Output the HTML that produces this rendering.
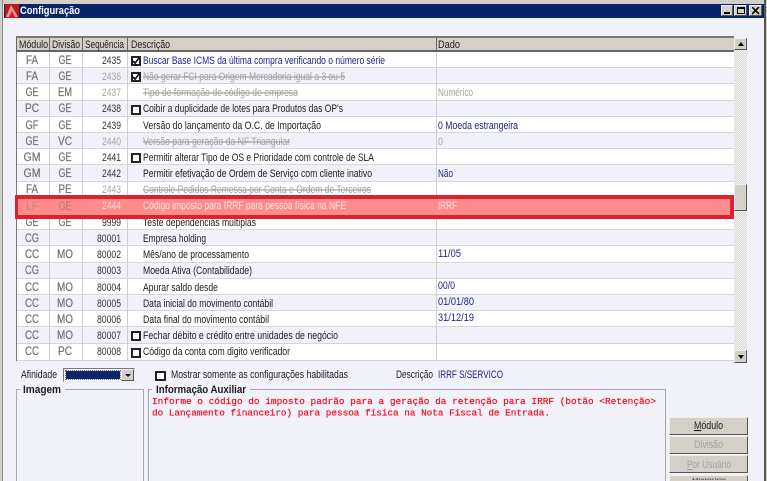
<!DOCTYPE html>
<html lang="pt"><head><meta charset="utf-8"><title>Configuração</title>
<style>
html,body{margin:0;padding:0;width:767px;height:481px;overflow:hidden}
body{background:#f1f1fa}
#w{position:absolute;left:0;top:0;width:767px;height:481px;overflow:hidden;background:#f1f1fa}
#w div,#w span{position:absolute;box-sizing:border-box}
#w svg{position:absolute;left:0;top:0}
svg.o{font-family:"Liberation Sans",sans-serif;font-size:11px;fill:#1c1c1c}
.r{left:17px;width:717px;border-bottom:1px solid #d6d6da;background:#fff}
.r.a{background:#f1f1fa}
.cl{width:1px;background:#cfcfd2;top:52px;height:309px}
.c{left:131px;width:10px;height:10px;border:2px solid #222;background:#fff}
.h{top:36px;height:16px;background:#d4d0c8;border-top:2px solid #777;border-bottom:2px solid #666;border-left:1px solid #666}
.w3d{background:#d4d0c8;border:1px solid;border-color:#eee #555 #555 #eee}
.btn{left:669px;width:79px;height:18px}
.gb{border:1px solid #a8a8ac;border-bottom:0;height:92px;top:389px}
.m{font-size:11.5px;fill:#707070;stroke:#707070;stroke-width:.2px}
.s{fill:#333}
.st{fill:#a0a0a0;text-decoration:line-through}
.gr{fill:#a4a4a4}
.bl{fill:#22228c}
.mono{font-family:"Liberation Mono",monospace;font-size:9.33px;fill:#f01020;stroke:#f01020;stroke-width:.2px}
.bd{font-weight:bold}
</style></head><body><div id="w">
<div style="left:0;top:0;width:767px;height:4px;background:#d4d0c8"></div>
<div style="left:0;top:0;width:3px;height:481px;background:#d4d0c8;border-right:1px solid #888"></div>
<div style="left:764px;top:0;width:3px;height:481px;background:#d4d0c8;border-left:2px solid #555"></div>
<div style="left:4px;top:4px;width:760px;height:14px;background:#0a246a"></div>
<div class="w3d" style="left:721px;top:5px;width:12px;height:11px"><span style="left:2px;top:6px;width:6px;height:2px;background:#000"></span></div>
<div class="w3d" style="left:734px;top:5px;width:13px;height:11px"><span style="left:2px;top:1px;width:8px;height:7px;border:1px solid #000;border-top-width:2px"></span></div>
<div class="w3d" style="left:749px;top:5px;width:13px;height:11px"><svg style="left:2px;top:1px" width="8" height="8"><path d="M0 0L7 7M7 0L0 7" stroke="#000" stroke-width="1.6"/></svg></div>

<div class="h" style="left:16px;width:33px"></div>
<div class="h" style="left:49px;width:33px"></div>
<div class="h" style="left:82px;width:45px"></div>
<div class="h" style="left:127px;width:309px"></div>
<div class="h" style="left:436px;width:298px"></div>
<div style="left:16px;top:52px;width:1px;height:309px;background:#777"></div>

<div class="r" style="top:52px;height:16px"></div>
<div class="r a" style="top:68px;height:16px"></div>
<div class="r" style="top:84px;height:17px"></div>
<div class="r a" style="top:101px;height:16px"></div>
<div class="r" style="top:117px;height:16px"></div>
<div class="r a" style="top:133px;height:16px"></div>
<div class="r" style="top:149px;height:16px"></div>
<div class="r a" style="top:165px;height:17px"></div>
<div class="r" style="top:182px;height:16px"></div>
<div class="r a" style="top:198px;height:16px"></div>
<div class="r" style="top:214px;height:16px"></div>
<div class="r a" style="top:230px;height:16px"></div>
<div class="r" style="top:246px;height:17px"></div>
<div class="r a" style="top:263px;height:16px"></div>
<div class="r" style="top:279px;height:16px"></div>
<div class="r a" style="top:295px;height:16px"></div>
<div class="r" style="top:311px;height:16px"></div>
<div class="r a" style="top:327px;height:17px"></div>
<div class="r" style="top:344px;height:17px"></div>
<div class="cl" style="left:49px"></div>
<div class="cl" style="left:82px"></div>
<div class="cl" style="left:127px"></div>
<div class="cl" style="left:436px"></div>

<div class="c" style="top:56px"><svg width="6" height="6" style="overflow:visible"><path d="M0 3l2 2.2L6 0" fill="none" stroke="#111" stroke-width="1.7"/></svg></div>
<div class="c" style="top:72px"><svg width="6" height="6" style="overflow:visible"><path d="M0 3l2 2.2L6 0" fill="none" stroke="#111" stroke-width="1.7"/></svg></div>
<div class="c" style="top:105px"></div>
<div class="c" style="top:153px"></div>
<div class="c" style="top:331px"></div>
<div class="c" style="top:348px"></div>

<svg class="o" width="767" height="481">
<text x="20" y="14" class="bd" style="fill:#fff" textLength="60" lengthAdjust="spacingAndGlyphs">Configuração</text>
<text x="19" y="48" textLength="29" lengthAdjust="spacingAndGlyphs">Módulo</text>
<text x="52" y="48" textLength="28" lengthAdjust="spacingAndGlyphs">Divisão</text>
<text x="85" y="48" textLength="39" lengthAdjust="spacingAndGlyphs">Sequência</text>
<text x="131" y="48" textLength="39" lengthAdjust="spacingAndGlyphs">Descrição</text>
<text x="438" y="48" textLength="22" lengthAdjust="spacingAndGlyphs">Dado</text>

<text class="m" x="26" y="64" textLength="12" lengthAdjust="spacingAndGlyphs">FA</text><text class="m" x="58.5" y="64" textLength="13" lengthAdjust="spacingAndGlyphs">GE</text><text class="s" x="102" y="64" textLength="19" lengthAdjust="spacingAndGlyphs">2435</text><text class="bl" x="143" y="64" textLength="242" lengthAdjust="spacingAndGlyphs">Buscar Base ICMS da última compra verificando o número série</text>
<text class="m" x="26" y="80" textLength="12" lengthAdjust="spacingAndGlyphs">FA</text><text class="m" x="58.5" y="80" textLength="13" lengthAdjust="spacingAndGlyphs">GE</text><text class="gr" x="102" y="80" textLength="19" lengthAdjust="spacingAndGlyphs">2436</text><text class="st" x="143" y="80" textLength="202" lengthAdjust="spacingAndGlyphs">Não gerar FCI para Origem Mercadoria igual a 3 ou 5</text>
<text class="m" x="25.5" y="96" textLength="13" lengthAdjust="spacingAndGlyphs">GE</text><text class="m" x="58" y="96" textLength="14" lengthAdjust="spacingAndGlyphs">EM</text><text class="gr" x="102" y="96" textLength="19" lengthAdjust="spacingAndGlyphs">2437</text><text class="st" x="143" y="96" textLength="155" lengthAdjust="spacingAndGlyphs">Tipo de formação do código de empresa</text><text class="gr" x="438" y="96" textLength="35" lengthAdjust="spacingAndGlyphs">Numérico</text>
<text class="m" x="25" y="112" textLength="14" lengthAdjust="spacingAndGlyphs">PC</text><text class="m" x="58.5" y="112" textLength="13" lengthAdjust="spacingAndGlyphs">GE</text><text class="s" x="102" y="112" textLength="19" lengthAdjust="spacingAndGlyphs">2438</text><text x="143" y="112" textLength="200" lengthAdjust="spacingAndGlyphs">Coibir a duplicidade de lotes para Produtos das OP's</text>
<text class="m" x="25.5" y="129" textLength="13" lengthAdjust="spacingAndGlyphs">GF</text><text class="m" x="58.5" y="129" textLength="13" lengthAdjust="spacingAndGlyphs">GE</text><text class="s" x="102" y="129" textLength="19" lengthAdjust="spacingAndGlyphs">2439</text><text x="143" y="129" textLength="178" lengthAdjust="spacingAndGlyphs">Versão do lançamento da O.C. de Importação</text><text class="bl" x="438" y="129" textLength="80" lengthAdjust="spacingAndGlyphs">0 Moeda estrangeira</text>
<text class="m" x="25.5" y="145" textLength="13" lengthAdjust="spacingAndGlyphs">GE</text><text class="m" x="58" y="145" textLength="14" lengthAdjust="spacingAndGlyphs">VC</text><text class="gr" x="102" y="145" textLength="19" lengthAdjust="spacingAndGlyphs">2440</text><text class="st" x="143" y="145" textLength="147" lengthAdjust="spacingAndGlyphs">Versão para geração da NF Triangular</text><text class="gr" x="438" y="145" textLength="5" lengthAdjust="spacingAndGlyphs">0</text>
<text class="m" x="23.5" y="161" textLength="17" lengthAdjust="spacingAndGlyphs">GM</text><text class="m" x="58.5" y="161" textLength="13" lengthAdjust="spacingAndGlyphs">GE</text><text class="s" x="102" y="161" textLength="19" lengthAdjust="spacingAndGlyphs">2441</text><text x="143" y="161" textLength="231" lengthAdjust="spacingAndGlyphs">Permitir alterar Tipo de OS e Prioridade com controle de SLA</text>
<text class="m" x="23.5" y="177" textLength="17" lengthAdjust="spacingAndGlyphs">GM</text><text class="m" x="58.5" y="177" textLength="13" lengthAdjust="spacingAndGlyphs">GE</text><text class="s" x="102" y="177" textLength="19" lengthAdjust="spacingAndGlyphs">2442</text><text x="143" y="177" textLength="229" lengthAdjust="spacingAndGlyphs">Permitir efetivação de Ordem de Serviço com cliente inativo</text><text class="bl" x="438" y="177" textLength="15" lengthAdjust="spacingAndGlyphs">Não</text>
<text class="m" x="26" y="193" textLength="12" lengthAdjust="spacingAndGlyphs">FA</text><text class="m" x="58.5" y="193" textLength="13" lengthAdjust="spacingAndGlyphs">PE</text><text class="gr" x="102" y="193" textLength="19" lengthAdjust="spacingAndGlyphs">2443</text><text class="st" x="143" y="193" textLength="228" lengthAdjust="spacingAndGlyphs">Controle Pedidos Remessa por Conta e Ordem de Terceiros</text>
<text class="m" x="25.5" y="226" textLength="13" lengthAdjust="spacingAndGlyphs">GE</text><text class="m" x="58.5" y="226" textLength="13" lengthAdjust="spacingAndGlyphs">GE</text><text class="s" x="102" y="226" textLength="19" lengthAdjust="spacingAndGlyphs">9999</text><text x="143" y="226" textLength="113" lengthAdjust="spacingAndGlyphs">Teste dependencias multiplas</text>
<text class="m" x="25" y="242" textLength="14" lengthAdjust="spacingAndGlyphs">CG</text><text class="s" x="97" y="242" textLength="24" lengthAdjust="spacingAndGlyphs">80001</text><text x="143" y="242" textLength="63" lengthAdjust="spacingAndGlyphs">Empresa holding</text>
<text class="m" x="25" y="258" textLength="14" lengthAdjust="spacingAndGlyphs">CC</text><text class="m" x="57" y="258" textLength="16" lengthAdjust="spacingAndGlyphs">MO</text><text class="s" x="97" y="258" textLength="24" lengthAdjust="spacingAndGlyphs">80002</text><text x="143" y="258" textLength="106" lengthAdjust="spacingAndGlyphs">Mês/ano de processamento</text><text class="bl" x="438" y="257" textLength="23" lengthAdjust="spacingAndGlyphs">11/05</text>
<text class="m" x="25" y="274" textLength="14" lengthAdjust="spacingAndGlyphs">CG</text><text class="s" x="97" y="274" textLength="24" lengthAdjust="spacingAndGlyphs">80003</text><text x="143" y="274" textLength="109" lengthAdjust="spacingAndGlyphs">Moeda Ativa (Contabilidade)</text>
<text class="m" x="25" y="291" textLength="14" lengthAdjust="spacingAndGlyphs">CC</text><text class="m" x="57" y="291" textLength="16" lengthAdjust="spacingAndGlyphs">MO</text><text class="s" x="97" y="291" textLength="24" lengthAdjust="spacingAndGlyphs">80004</text><text x="143" y="291" textLength="75" lengthAdjust="spacingAndGlyphs">Apurar saldo desde</text><text class="bl" x="438" y="289" textLength="17" lengthAdjust="spacingAndGlyphs">00/0</text>
<text class="m" x="25" y="307" textLength="14" lengthAdjust="spacingAndGlyphs">CC</text><text class="m" x="57" y="307" textLength="16" lengthAdjust="spacingAndGlyphs">MO</text><text class="s" x="97" y="307" textLength="24" lengthAdjust="spacingAndGlyphs">80005</text><text x="143" y="307" textLength="130" lengthAdjust="spacingAndGlyphs">Data inicial do movimento contábil</text><text class="bl" x="438" y="305" textLength="36" lengthAdjust="spacingAndGlyphs">01/01/80</text>
<text class="m" x="25" y="323" textLength="14" lengthAdjust="spacingAndGlyphs">CC</text><text class="m" x="57" y="323" textLength="16" lengthAdjust="spacingAndGlyphs">MO</text><text class="s" x="97" y="323" textLength="24" lengthAdjust="spacingAndGlyphs">80006</text><text x="143" y="323" textLength="126" lengthAdjust="spacingAndGlyphs">Data final do movimento contábil</text><text class="bl" x="438" y="321" textLength="36" lengthAdjust="spacingAndGlyphs">31/12/19</text>
<text class="m" x="25" y="339" textLength="14" lengthAdjust="spacingAndGlyphs">CC</text><text class="m" x="57" y="339" textLength="16" lengthAdjust="spacingAndGlyphs">MO</text><text class="s" x="97" y="339" textLength="24" lengthAdjust="spacingAndGlyphs">80007</text><text x="143" y="339" textLength="195" lengthAdjust="spacingAndGlyphs">Fechar débito e crédito entre unidades de negócio</text>
<text class="m" x="25" y="355" textLength="14" lengthAdjust="spacingAndGlyphs">CC</text><text class="m" x="58" y="355" textLength="14" lengthAdjust="spacingAndGlyphs">PC</text><text class="s" x="97" y="355" textLength="24" lengthAdjust="spacingAndGlyphs">80008</text><text x="143" y="355" textLength="147" lengthAdjust="spacingAndGlyphs">Código da conta com digito verificador</text>
</svg>

<svg style="left:5px;top:4px" width="14" height="14"><rect width="14" height="14" fill="#c01820"/><path d="M1 13L6 1l3 5 4 7z" fill="#ee9090"/><path d="M4 13l3-6 3 6z" fill="#d02028"/></svg>

<div style="left:734px;top:38px;width:13px;height:325px;background:repeating-conic-gradient(#d8d6d0 0 25%,#f6f6f8 0 50%) 0 0/2px 2px"></div>
<div class="w3d" style="left:734px;top:38px;width:13px;height:12px"><svg style="left:2px;top:2px" width="8" height="6"><path d="M4 1L7 5H1z" fill="#000"/></svg></div>
<div class="w3d" style="left:734px;top:350px;width:13px;height:13px"><svg style="left:2px;top:3px" width="8" height="6"><path d="M1 1H7L4 5z" fill="#000"/></svg></div>
<div class="w3d" style="left:734px;top:184px;width:13px;height:27px"></div>

<div style="left:15px;top:195px;width:719px;height:24px;border:4px solid #e02030;border-left-width:3px;background:#ff8b8b"></div>

<div style="left:63px;top:368px;width:72px;height:14px;background:#fff;border:1px solid;border-color:#777 #eee #eee #777"><span style="left:2px;top:2px;width:54px;height:8px;background:#0a246a;outline:1px dotted #777"></span><span class="w3d" style="left:57px;top:0;width:13px;height:12px"><svg style="left:3px;top:4px" width="6" height="4"><path d="M0 0H6L3 3z" fill="#000"/></svg></span></div>
<div style="left:155px;top:371px;width:11px;height:10px;border:2px solid #222;background:#fff"></div>
<div class="gb" style="left:16px;width:128px"></div>
<div class="gb" style="left:148px;width:518px"></div>
<div style="left:20px;top:386px;width:45px;height:8px;background:#f1f1fa"></div>
<div style="left:152px;top:386px;width:98px;height:8px;background:#f1f1fa"></div>
<div class="w3d btn" style="top:417px"></div>
<div class="w3d btn" style="top:436px"></div>
<div class="w3d btn" style="top:455px"></div>
<div class="w3d" style="left:669px;width:79px;top:475px;height:6px;border-bottom:0"></div>

<svg class="o" width="767" height="481">
<text x="26" y="210" style="font-size:11.5px;fill:#b48888" textLength="12" lengthAdjust="spacingAndGlyphs">LF</text>
<text x="58.5" y="210" style="font-size:11.5px;fill:#a87c7c" textLength="13" lengthAdjust="spacingAndGlyphs">GE</text>
<text x="102" y="209" style="fill:#ffdcdc" textLength="19" lengthAdjust="spacingAndGlyphs">2444</text>
<text x="143" y="209" style="fill:#ffe6e6" textLength="203" lengthAdjust="spacingAndGlyphs">Código imposto para IRRF para pessoa física na NFE</text>
<text x="438" y="209" style="fill:#ffe6e6" textLength="19" lengthAdjust="spacingAndGlyphs">IRRF</text>

<text x="21" y="378" textLength="36" lengthAdjust="spacingAndGlyphs">Afinidade</text>
<text x="171" y="378" textLength="177" lengthAdjust="spacingAndGlyphs">Mostrar somente as configurações habilitadas</text>
<text x="396" y="378" textLength="37" lengthAdjust="spacingAndGlyphs">Descrição</text>
<text class="bl" x="438" y="378" textLength="65" lengthAdjust="spacingAndGlyphs">IRRF S/SERVICO</text>
<text class="bd" x="23" y="393" textLength="38" lengthAdjust="spacingAndGlyphs">Imagem</text>
<text class="bd" x="156" y="393" textLength="90" lengthAdjust="spacingAndGlyphs">Informação Auxiliar</text>
<text class="mono" x="152" y="404" textLength="504" lengthAdjust="spacingAndGlyphs">Informe o código do imposto padrão para a geração da retenção para IRRF (botão &lt;Retenção&gt;</text>
<text class="mono" x="152" y="415.5" textLength="398" lengthAdjust="spacingAndGlyphs">do Lançamento financeiro) para pessoa física na Nota Fiscal de Entrada.</text>
<text x="694" y="429" textLength="29" lengthAdjust="spacingAndGlyphs"><tspan text-decoration="underline">M</tspan>ódulo</text>
<text class="gr" x="694" y="448" textLength="29" lengthAdjust="spacingAndGlyphs">Divisão</text>
<text class="gr" x="687" y="468" textLength="44" lengthAdjust="spacingAndGlyphs"><tspan text-decoration="underline">P</tspan>or Usuário</text>
<text x="692" y="480" style="font-size:3px" textLength="34" lengthAdjust="spacingAndGlyphs">Histórico</text>
</svg>
</div></body></html>
